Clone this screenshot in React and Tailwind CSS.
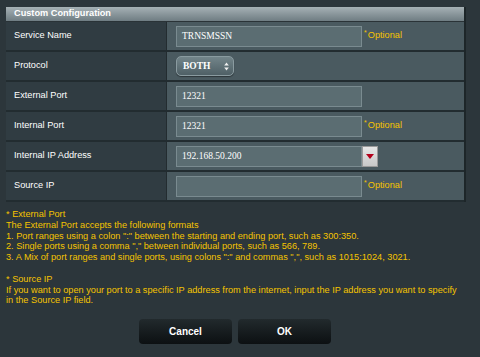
import React from 'react';

const rows = [
	{ label: 'Service Name', kind: 'input', value: 'TRNSMSSN', optional: true },
	{ label: 'Protocol', kind: 'select', value: 'BOTH' },
	{ label: 'External Port', kind: 'input', value: '12321' },
	{ label: 'Internal Port', kind: 'input', value: '12321', optional: true },
	{ label: 'Internal IP Address', kind: 'ip', value: '192.168.50.200' },
	{ label: 'Source IP', kind: 'input', value: '', optional: true },
];

function Optional() {
	return (
		<span className="ml-[2px] text-[#f5c400] text-[9.2px] leading-none flex items-start">
			<span className="text-[7px] -mt-[2px] mr-[1px]">*</span>
			<span>Optional</span>
		</span>
	);
}

function TextBox({ value }) {
	return (
		<div className="w-[186px] h-[21px] bg-[#5b6d72] border border-[#7a8b90] flex items-center pl-[5px] text-white text-[9.5px] font-['Liberation_Serif',serif]">
			{value}
		</div>
	);
}

function Select({ value }) {
	return (
		<div className="w-[58px] h-[20px] rounded-[5px] bg-gradient-to-b from-[#73858a] to-[#4f6066] border border-[#8a9ba0] shadow-[0_1px_1px_rgba(0,0,0,0.4)] flex items-center justify-between pl-[6px] pr-[4px] text-white text-[9.5px] font-bold font-['Liberation_Serif',serif]">
			<span>{value}</span>
			<svg width="5" height="9" viewBox="0 0 5 9">
				<path d="M2.5 0.5 L4.8 3.6 L0.2 3.6 Z" fill="#f0f0f0" />
				<path d="M2.5 8.5 L4.8 5.4 L0.2 5.4 Z" fill="#f0f0f0" />
			</svg>
		</div>
	);
}

function Row({ row }) {
	return (
		<div className="grid grid-cols-[161px_1fr] h-[30px] border-b-2 border-[#222c30]">
			<div className="bg-[#303c42] border-r border-[#232c30] flex items-center pl-[8px] text-white text-[9.2px]">
				{row.label}
			</div>
			<div className="bg-[#4a5a60] flex items-center pl-[9px]">
				{row.kind === 'select' ? (
					<Select value={row.value} />
				) : (
					<TextBox value={row.value} />
				)}
				{row.kind === 'ip' && (
					<div className="w-[16px] h-[21px] bg-gradient-to-b from-[#e6e6e6] to-[#c8c8c8] border border-[#9a9a9a] flex items-center justify-center">
						<svg width="8" height="5" viewBox="0 0 8 5">
							<path d="M0 0 H8 L4 5 Z" fill="#b3001b" />
						</svg>
					</div>
				)}
				{row.optional && <Optional />}
			</div>
		</div>
	);
}

export default function App() {
	return (
		<div className="w-[480px] h-[357px] bg-[#2c363b] overflow-hidden font-['Liberation_Sans',Arial,sans-serif]">
			<div className="pt-[7px] pl-[6px]">
				<div className="w-[458px] shadow-[2px_0_0_#1d2629]">
					<div className="h-[15px] bg-gradient-to-b from-[#a6b1b5] to-[#6f7d83] border-b border-[#2a3337] flex items-center pl-[8px] text-white font-bold text-[9.2px]">
						Custom Configuration
					</div>
					{rows.map((r) => (
						<Row key={r.label} row={r} />
					))}
				</div>
			</div>

			<div className="mt-[7px] pl-[6px] text-[#f5c400] text-[9.2px] leading-[10.8px] whitespace-nowrap">
				<div>* External Port</div>
				<div>The External Port accepts the following formats</div>
				<div>1. Port ranges using a colon ":" between the starting and ending port, such as 300:350.</div>
				<div>2. Single ports using a comma "," between individual ports, such as 566, 789.</div>
				<div>3. A Mix of port ranges and single ports, using colons ":" and commas ",", such as 1015:1024, 3021.</div>
				<div className="h-[10.8px]" />
				<div>* Source IP</div>
				<div>If you want to open your port to a specific IP address from the internet, input the IP address you want to specify</div>
				<div>in the Source IP field.</div>
			</div>

			<div className="mt-[13px] pl-[139px] flex gap-[6px]">
				<button className="w-[93px] h-[25px] rounded-[4px] bg-gradient-to-b from-[#222a2d] to-[#0c1012] text-white font-bold text-[10px]">
					Cancel
				</button>
				<button className="w-[93px] h-[25px] rounded-[4px] bg-gradient-to-b from-[#222a2d] to-[#0c1012] text-white font-bold text-[10px]">
					OK
				</button>
			</div>
		</div>
	);
}
